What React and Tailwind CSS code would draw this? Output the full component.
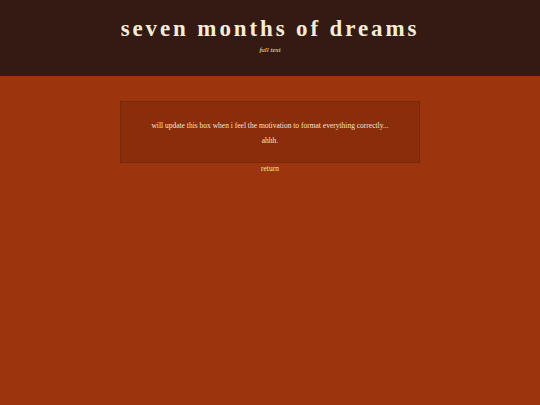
export default function App() {
  return (
    <div className="min-h-[405px] bg-[#9c350d] font-['Liberation_Serif',serif] text-[#f3e6cf]">
      <header className="h-[76px] bg-[#341a12] flex flex-col items-center pt-[14px]">
        <h1 className="text-[23px] font-bold tracking-[0.125em] leading-[30px] text-[#f6ecd6]">
          seven months of dreams
        </h1>
        <p className="text-[7px] italic leading-[10px] mt-[1px]">full text</p>
      </header>
      <main className="flex flex-col items-center pt-[25px]">
        <div className="w-[300px] h-[62px] bg-[#8a2d0b] border border-[#7a2609] flex flex-col items-center pt-[19px]">
          <p className="text-[7.5px] leading-[9px]">
            will update this box when i feel the motivation to format everything correctly...
          </p>
          <p className="text-[7.5px] leading-[9px] mt-[6px]">ahhh.</p>
        </div>
        <a className="text-[7.5px] leading-[9px] mt-[1px]">return</a>
      </main>
    </div>
  );
}
